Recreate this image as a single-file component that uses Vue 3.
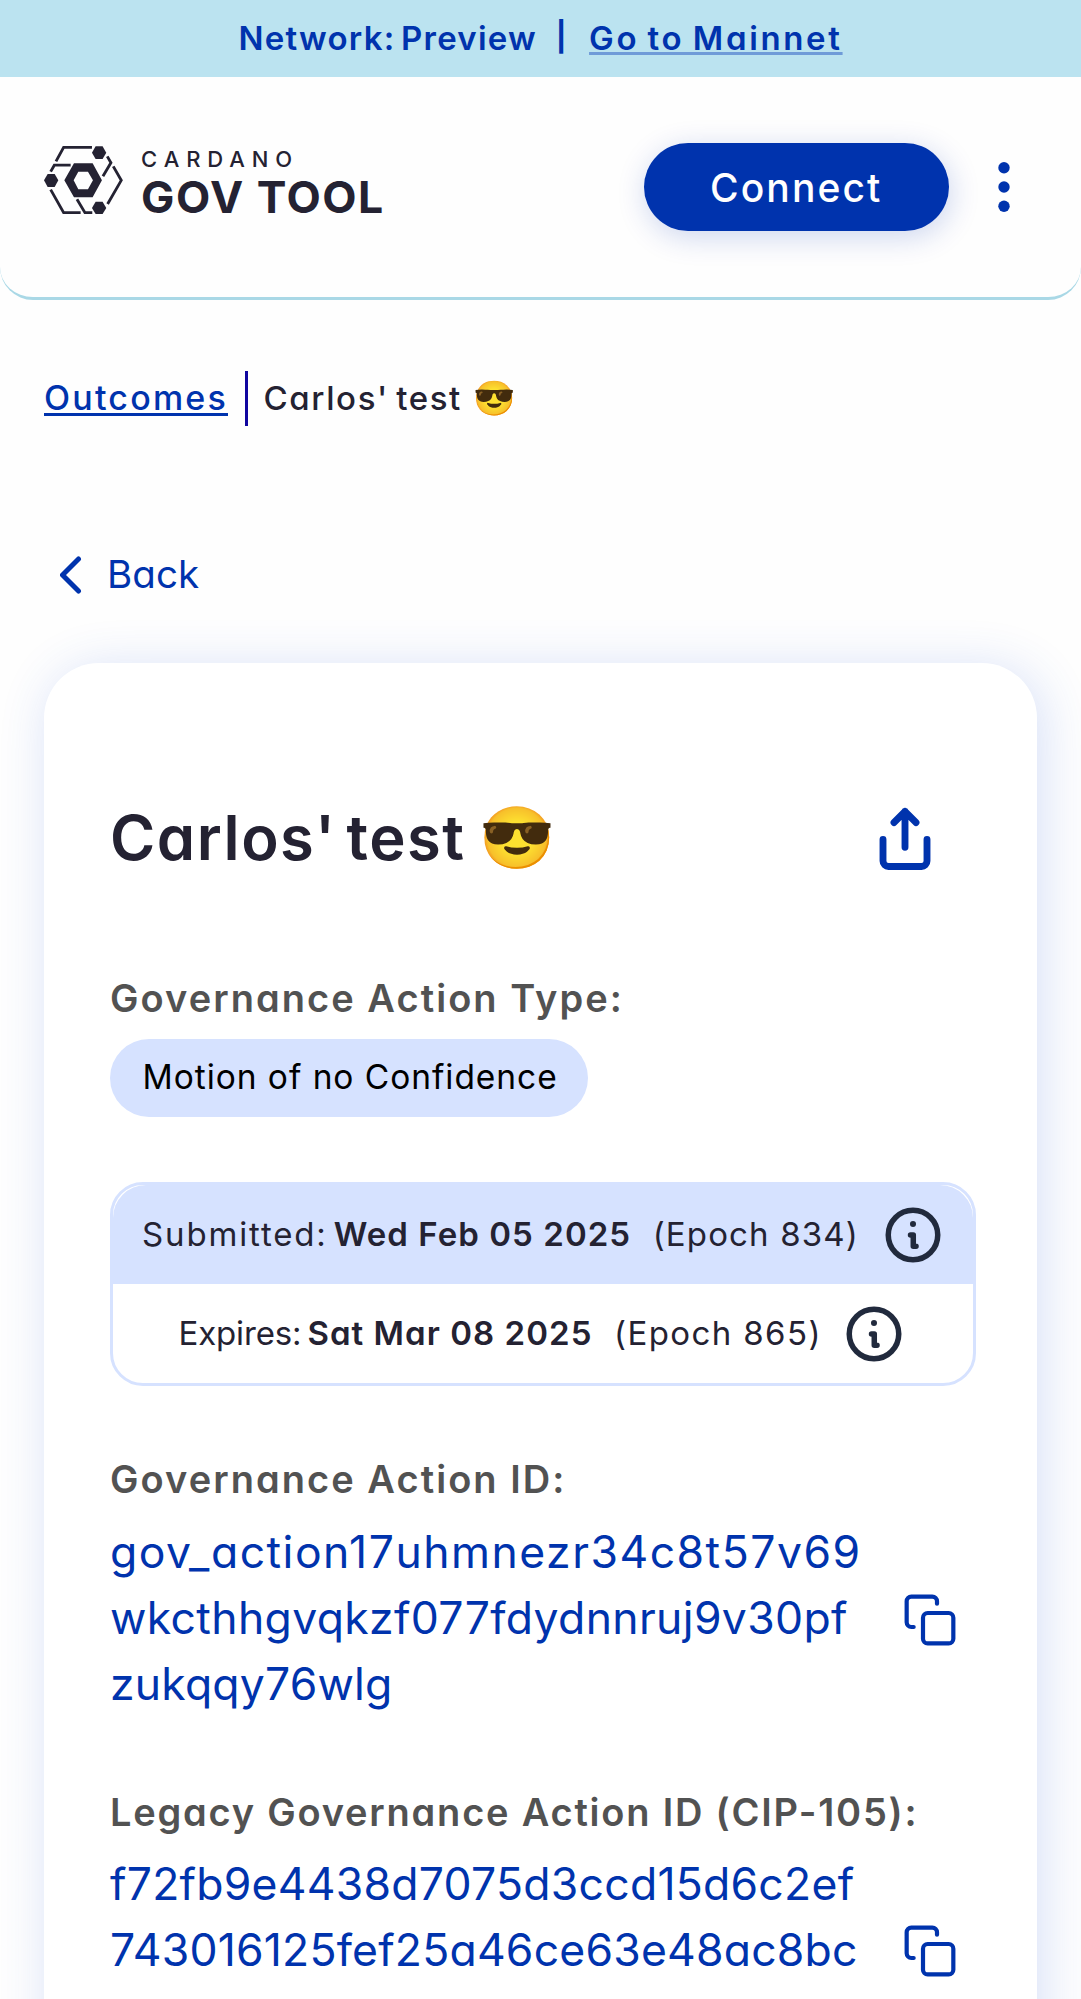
<script setup>
const dates = [
  { key: 'submitted', label: 'Submitted:', date: 'Wed Feb 05 2025', epoch: '(Epoch 834)' },
  { key: 'expires', label: 'Expires:', date: 'Sat Mar 08 2025', epoch: '(Epoch 865)' },
]

const ids = [
  {
    key: 'cip129',
    label: 'Governance Action ID:',
    lines: ['gov_action17uhmnezr34c8t57v69', 'wkcthhgvqkzf077fdydnnruj9v30pf', 'zukqqy76wlg'],
  },
  {
    key: 'cip105',
    label: 'Legacy Governance Action ID (CIP-105):',
    lines: ['f72fb9e4438d7075d3ccd15d6c2ef', '743016125fef25a46ce63e48ac8bc'],
  },
]
</script>

<template>
  <div class="page">
    <div class="banner">
      <span class="network">Network: Preview</span>
      <span class="bar">|</span>
      <a class="mainnet">Go to Mainnet</a>
    </div>

    <header class="header">
      <div class="logo">
        <svg class="mark" viewBox="42 47 236 204" fill="none" stroke="#242232" stroke-width="8.5">
          <path d="M78 93 101 51h85" />
          <path d="M62 124 73 104.500h49" />
          <path d="M62 178 101 247h51" />
          <path d="M141 207 165 247h22" />
          <path d="M232 78 243 97 219 138" />
          <path d="M250 108 274 150 233 221" />
          <g fill="#242232" stroke="none">
            <path d="M42 150 53 131h21l11 19-11 20H53z" />
            <path d="M186 67 197 48h21l11 19-11 19h-21z" />
            <path d="M186 233 197 214h21l11 19-11 18h-21z" />
            <path fill-rule="evenodd" d="M103 150 132 99h56l28 51-28 51h-56zM131 150l14 27h29l15-27-15-26h-29z" />
          </g>
        </svg>
        <div class="wordmark">
          <span class="cardano">CARDANO</span>
          <span class="govtool">GOV TOOL</span>
        </div>
      </div>
      <div class="actions">
        <button class="connect">Connect</button>
        <svg class="dots" viewBox="0 0 12 52" fill="#0033ad">
          <circle cx="6" cy="6.700" r="5.700" />
          <circle cx="6" cy="26" r="5.700" />
          <circle cx="6" cy="45.300" r="5.700" />
        </svg>
      </div>
    </header>

    <nav class="crumbs">
      <a class="outcomes">Outcomes</a>
      <span class="divider"></span>
      <span class="current">Carlos' test</span>
      <span class="emoji">😎</span>
    </nav>

    <a class="back">
      <svg viewBox="0 0 22 38" fill="none" stroke="#0033ad" stroke-width="5" stroke-linecap="round" stroke-linejoin="round">
        <path d="M18.500 3 2.500 19l16 16" />
      </svg>
      <span>Back</span>
    </a>

    <main class="card">
      <div class="title">
        <h1>Carlos' test</h1>
        <span class="face">😎</span>
        <svg class="share" viewBox="0 0 24 24" fill="none" stroke="#0033ad" stroke-width="2.500" stroke-linecap="round" stroke-linejoin="round">
          <path d="M4 12.200V20a2 2 0 0 0 2 2h12a2 2 0 0 0 2-2v-7.800M16 6l-4-4-4 4M12 2v13" />
        </svg>
      </div>

      <div class="label type">Governance Action Type:</div>
      <span class="pill">Motion of no Confidence</span>

      <div class="dates">
        <div v-for="d in dates" :key="d.key" class="row" :class="d.key">
          <span class="what">{{ d.label }}</span>
          <b class="date">{{ d.date }}</b>
          <span class="epoch">{{ d.epoch }}</span>
          <svg class="info" viewBox="0 0 24 24" fill="none" stroke="#212a3d" stroke-width="2" stroke-linecap="round" stroke-linejoin="round">
            <circle cx="12" cy="12" r="9" />
            <path d="M11.100 12h1v4.100h1" />
            <circle cx="12" cy="8" r="1.100" fill="#212a3d" stroke="none" />
          </svg>
        </div>
      </div>

      <section v-for="item in ids" :key="item.key" class="id" :class="item.key">
        <div class="label">{{ item.label }}</div>
        <div class="value">
          <div class="hash">
            <span v-for="(line, i) in item.lines" :key="line" :class="'line' + (i + 1)">{{ line }}</span>
          </div>
          <svg class="copy" viewBox="0 0 24 24" fill="none" stroke="#0033ad" stroke-width="1.800" stroke-linecap="round" stroke-linejoin="round">
            <rect x="9" y="9" width="13" height="13" rx="2" />
            <path d="M5 15H4a2 2 0 0 1-2-2V4a2 2 0 0 1 2-2h9a2 2 0 0 1 2 2v1" />
          </svg>
        </div>
      </section>
    </main>
  </div>
</template>

<style>
body {
  margin: 0;
  background: #fefefe;
}
</style>

<style scoped>
.page {
  width: 1081px;
  height: 1999px;
  overflow: hidden;
  box-sizing: border-box;
  background: #fefefe;
  color: #242232;
  font-family: Inter, "Noto Sans", sans-serif;
  font-feature-settings: "cv11";
  font-size: 33px;
}
.page span,
.page a,
.page b,
.page h1 {
  white-space: nowrap;
}
svg {
  display: block;
  flex: none;
}

.banner {
  display: flex;
  justify-content: center;
  height: 77px;
  line-height: 76px;
  background: #bbe3f0;
  color: #0033ad;
  font-weight: 600;
}
.network {
  letter-spacing: 1.25px;
  word-spacing: -4px;
}
.bar {
  width: 12px;
  margin: 0 22px 0 18px;
  font-size: 29px;
  font-weight: 700;
  line-height: 73px;
  text-align: center;
}
.mainnet {
  letter-spacing: 2.650px;
  word-spacing: -2.500px;
  text-decoration: underline;
  text-decoration-color: #6f9bd8;
  text-decoration-thickness: 3px;
  text-underline-offset: 2px;
  text-decoration-skip-ink: none;
}

.header {
  display: flex;
  justify-content: space-between;
  box-sizing: border-box;
  height: 223px;
  padding: 0 71.5px 0 44px;
  border-bottom: 3px solid #a9d8e6;
  border-radius: 0 0 33px 33px;
}
.logo {
  display: flex;
  gap: 18.500px;
  padding-top: 69px;
}
.mark {
  width: 78.600px;
  height: 68px;
}
.wordmark {
  display: flex;
  flex-direction: column;
}
.cardano {
  font-size: 22px;
  font-weight: 500;
  line-height: 26px;
  letter-spacing: 6.900px;
}
.govtool {
  font-size: 44.500px;
  font-weight: 700;
  line-height: 51px;
  letter-spacing: 1.500px;
}
.actions {
  display: flex;
  align-items: center;
  gap: 48.500px;
}
.connect {
  width: 305.500px;
  height: 88px;
  padding: 1px 0 0;
  border: 0;
  border-radius: 44px;
  background: #0033ad;
  color: #fff;
  font: 500 39px/86px Inter, sans-serif;
  letter-spacing: 2.100px;
  box-shadow: 2px 6px 30px rgba(0, 51, 173, 0.2);
}
.dots {
  width: 12px;
  height: 52px;
}

.crumbs {
  display: flex;
  align-items: center;
  height: 56px;
  margin-top: 70px;
  padding-left: 44px;
  font-weight: 500;
  line-height: 56px;
}
.outcomes {
  font-size: 34px;
  color: #0033ad;
  letter-spacing: 2.200px;
  text-decoration: underline;
  text-decoration-thickness: 3px;
  text-underline-offset: 3px;
  text-decoration-skip-ink: none;
}
.divider {
  width: 3px;
  height: 55px;
  margin: 0 16px 0 16.500px;
  background: #10069f;
}
.current {
  letter-spacing: 1.6px;
  word-spacing: -3px;
}
.emoji {
  margin-left: 11px;
  font-size: 34px;
}

.back {
  display: flex;
  align-items: center;
  width: max-content;
  height: 60px;
  margin: 118.5px 0 0 60px;
  color: #0033ad;
  font-size: 38.500px;
  line-height: 61px;
  letter-spacing: 0.100px;
}
.back svg {
  width: 22px;
  height: 38px;
  margin-right: 25px;
}

.card {
  box-sizing: border-box;
  width: 993px;
  height: 1500px;
  margin: 58.5px 0 0 44px;
  padding: 133px 60px 0 66px;
  border-radius: 55px;
  background: #fff;
  box-shadow: 5.5px 5.5px 50px rgba(47, 98, 220, 0.19);
}
.title {
  display: flex;
  align-items: center;
  height: 82px;
}
h1 {
  margin: 0;
  font-size: 61.500px;
  font-weight: 600;
  line-height: 81px;
  letter-spacing: 1.500px;
  word-spacing: -7px;
}
.face {
  margin-left: 13.500px;
  font-size: 61px;
  line-height: 79px;
}
.share {
  width: 66px;
  height: 66px;
  margin: 3px 39.500px 0 auto;
}
.label {
  color: #525252;
  font-size: 38px;
  font-weight: 600;
  line-height: 52px;
  height: 52px;
  letter-spacing: 2.050px;
  white-space: nowrap;
}
.type {
  margin-top: 94px;
  margin-bottom: 15px;
}
.pill {
  display: block;
  box-sizing: border-box;
  width: 478px;
  height: 77.500px;
  padding-left: 32.500px;
  border-radius: 39px;
  background: #d6e2ff;
  color: #000;
  font-size: 33.500px;
  line-height: 77px;
  letter-spacing: 0.950px;
}

.dates {
  box-sizing: border-box;
  width: 866px;
  height: 204px;
  margin-top: 65.5px;
  border: 3px solid #d6e2ff;
  border-radius: 33px;
}
.row {
  display: flex;
  align-items: center;
  height: 99px;
}
.row span,
.row b {
  padding-bottom: 2px;
}
.submitted {
  padding-left: 29px;
  border-radius: 33px 33px 0 0;
  background: #d6e2ff;
}
.expires {
  padding-left: 65.500px;
}
.submitted .what {
  letter-spacing: 1.850px;
}
.date {
  margin: 0 21.5px 0 6px;
  font-weight: 600;
  letter-spacing: 1.05px;
}
.submitted .epoch {
  letter-spacing: 1.15px;
}
.expires .what {
  letter-spacing: -0.150px;
}
.expires .epoch {
  letter-spacing: 1.4px;
}
.info {
  width: 66px;
  height: 66px;
  margin-left: 21.500px;
}
.expires .info {
  margin-left: 19px;
}

.cip129 {
  margin-top: 67px;
}
.cip105 {
  margin-top: 69px;
}
.cip105 .label {
  letter-spacing: 1.780px;
}
.value {
  display: flex;
  align-items: center;
  height: 198px;
  margin-top: 14px;
}
.cip105 .value {
  margin-top: 12.500px;
}
.hash {
  display: flex;
  flex-direction: column;
  width: 791.500px;
  height: 198px;
  color: #0033ad;
  font-size: 44.500px;
  line-height: 66px;
}
.cip129 .line1 {
  letter-spacing: 1.500px;
}
.cip129 .line2 {
  letter-spacing: 0.350px;
}
.cip129 .line3 {
  letter-spacing: 0.200px;
}
.cip105 .line1 {
  letter-spacing: 0.25px;
}
.cip105 .line2 {
  letter-spacing: 0.200px;
}
.copy {
  width: 56px;
  height: 56px;
  margin-top: 3px;
}
</style>
